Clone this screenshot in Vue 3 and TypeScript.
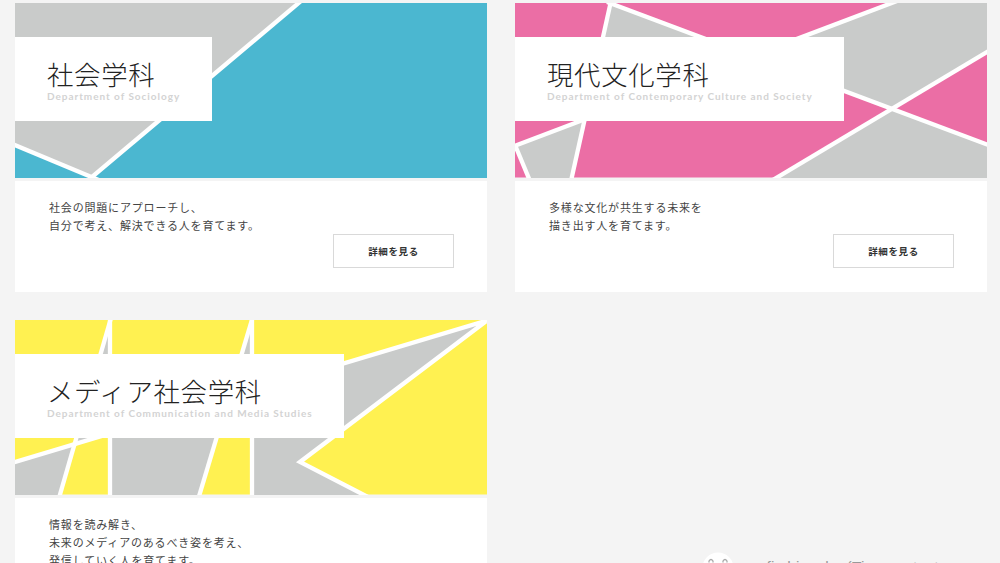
<template>
  <main class="page">
    <section class="departments">
      <article v-for="dept in departments" :key="dept.en" class="card">
        <div class="card-visual">
          <svg class="card-art" viewBox="0 0 472 174.5" preserveAspectRatio="none">
            <rect width="472" height="174.5" :fill="dept.base" />
            <polygon v-for="shape in dept.shapes" :key="shape" :points="shape" :fill="dept.accent" />
            <polyline
              v-for="line in dept.lines"
              :key="line"
              :points="line"
              fill="none"
              stroke="#fff"
              stroke-width="4.3"
            />
          </svg>
          <div class="card-title">
            <h2>{{ dept.name }}</h2>
            <p>{{ dept.en }}</p>
          </div>
        </div>
        <div class="card-body">
          <p class="card-text">
            <span v-for="text in dept.description" :key="text">{{ text }}</span>
          </p>
          <a class="card-button">詳細を見る</a>
        </div>
      </article>
    </section>

    <div class="account">
      <svg class="account-icon" viewBox="0 0 32 32">
        <circle cx="16" cy="16" r="15.5" fill="#fff" />
        <path d="M7 10.5v-1.5q2-3 4 0v1.5M21 10.5v-1.5q2-3 4 0v1.5" fill="none" stroke="#aaa" stroke-width="1.3" />
      </svg>
      <span class="account-name">nyofi shinsaku (Tianmentsut</span>
    </div>
  </main>
</template>

<script setup lang="ts">
interface Department {
  name: string;
  en: string;
  description: string[];
  base: string;
  accent: string;
  shapes: string[];
  lines: string[];
}

const gray = '#c9cbca';

const departments: Department[] = [
  {
    name: '社会学科',
    en: 'Department of Sociology',
    description: ['社会の問題にアプローチし、', '自分で考え、解決できる人を育てます。'],
    base: gray,
    accent: '#4bb7d0',
    shapes: ['285,-1 472,-1 472,175 77,175', '0,142 78,175 0,175'],
    lines: ['286,-2 77,174', '-2,141.3 86,178'],
  },
  {
    name: '現代文化学科',
    en: 'Department of Contemporary Culture and Society',
    description: ['多様な文化が共生する未来を', '描き出す人を育てます。'],
    base: '#eb6ea5',
    accent: gray,
    shapes: [
      '95,0 236,53 69,117',
      '236,53 377,0 472,0 472,49 376,105.5',
      '376,105.5 472,141 472,175 261,175',
      '0,143 69,117 56,175 14,175',
    ],
    lines: ['-2,143.5 382,-2', '92,-1 476,143', '257,177.5 476,46.5', '96,-2 56,178', '0,142 15,178'],
  },
  {
    name: 'メディア社会学科',
    en: 'Department of Communication and Media Studies',
    description: ['情報を読み解き、', '未来のメディアのあるべき姿を考え、', '発信していく人を育てます。'],
    base: '#fff151',
    accent: gray,
    shapes: [
      '0,142 60,124 45,175 0,175',
      '95,0 95,113.5 60,124',
      '95,113.5 213.6,78 184,175 95,175',
      '237,0 237,71 213.6,78',
      '237,71 472,0 285,142 349,175 237,175',
    ],
    lines: ['95,-2 95,178', '237,-2 237,178', '96,-2 44,178', '237.5,-2 183.5,178', '-2,142.6 472,.5 285,142 353,177'],
  },
];
</script>

<style>
body {
  margin: 0;
  background: #f4f4f4;
}
</style>

<style scoped>
.page {
  position: relative;
  box-sizing: border-box;
  height: 563px;
  padding: 3px 13px 0 15px;
  overflow: hidden;
  background: #f4f4f4;
  color: #444;
  font-family: 'Noto Sans CJK JP', sans-serif;
}

.departments {
  display: grid;
  grid-template-columns: 472px 472px;
  gap: 28px;
  align-items: start;
}

h2,
p {
  margin: 0;
}

.card-visual {
  display: flex;
  align-items: flex-start;
  position: relative;
  box-sizing: border-box;
  height: 175px;
  padding-top: 33.5px;
}

.card-art {
  position: absolute;
  top: 0;
  left: 0;
  width: 472px;
  height: 174.5px;
}

.card-title {
  position: relative;
  box-sizing: border-box;
  height: 84.9px;
  padding: 19px 31.4px 0 32px;
  background: #fff;
}

.card-title h2 {
  height: 34.5px;
  color: #222;
  font-size: 26.4px;
  font-weight: 300;
  line-height: 35px;
  letter-spacing: 0.7px;
}

.card-title p {
  color: #d3d3d3;
  font-family: Lato, sans-serif;
  font-size: 10px;
  font-weight: 700;
  line-height: 12px;
  letter-spacing: 0.96px;
  white-space: nowrap;
}

.card-body {
  display: flex;
  flex-direction: column;
  padding: 16.5px 33px 24.5px 34px;
  margin-top: 3px;
  background: #fff;
}

.card-text {
  font-size: 11px;
  line-height: 18px;
  letter-spacing: 0.82px;
}

.card-text span {
  display: block;
}

.card-button {
  align-self: flex-end;
  box-sizing: border-box;
  width: 121px;
  height: 34px;
  border: 1px solid #d9d9d9;
  color: #333;
  font-size: 9.5px;
  font-weight: 700;
  line-height: 32px;
  letter-spacing: 0.6px;
  text-align: center;
}

/* 画面下端のアカウント表示 */
.account {
  display: flex;
  align-items: center;
  gap: 7px;
  position: absolute;
  top: 552px;
  left: 702px;
  height: 32px;
  color: #999;
  font-family: 'Liberation Sans', sans-serif;
  font-size: 15.5px;
  white-space: nowrap;
}

.account-icon {
  width: 32px;
  height: 32px;
}

.account-name {
  line-height: 16px;
  padding-bottom: 3px;
  letter-spacing: 0.2px;
}
</style>
